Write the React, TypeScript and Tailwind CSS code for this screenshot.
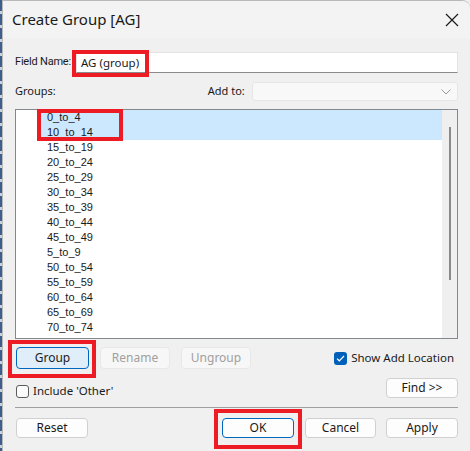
import React from "react";

const items = [
  "0_to_4",
  "10_to_14",
  "15_to_19",
  "20_to_24",
  "25_to_29",
  "30_to_34",
  "35_to_39",
  "40_to_44",
  "45_to_49",
  "5_to_9",
  "50_to_54",
  "55_to_59",
  "60_to_64",
  "65_to_69",
  "70_to_74",
];

const ui = "font-['Noto_Sans','Liberation_Sans',sans-serif]";

function Btn({
  label,
  w,
  kind = "normal",
}: {
  label: string;
  w: string;
  kind?: "normal" | "primary" | "pressed" | "disabled";
}) {
  const styles = {
    normal: "border-[#d0d0d0] bg-[#fdfdfd] text-[#1a1a1a]",
    primary: "border-[#0067c0] bg-[#fdfdfd] text-[#1a1a1a]",
    pressed: "border-[#0067c0] bg-[#e0eef9] text-[#1a1a1a]",
    disabled: "border-[#e8e8e8] bg-[#f7f7f7] text-[#a0a0a0]",
  }[kind];
  return (
    <div
      className={`${w} flex h-full items-center justify-center rounded-[4px] border text-[12px] ${styles}`}
    >
      {label}
    </div>
  );
}

function RedBox({ className }: { className: string }) {
  return (
    <div
      className={`pointer-events-none absolute z-10 border-[4px] border-[#ed1c24] ${className}`}
    />
  );
}

export default function App() {
  return (
    <div className={`flex h-[451px] w-[470px] overflow-hidden bg-[#f0f0f0] ${ui}`}>
      <div className="w-[2px] bg-[repeating-linear-gradient(to_bottom,#3e5f8e_0_11px,#c9d1dc_11px_14px)]" />
      <div className="relative flex flex-1 flex-col rounded-tr-[8px] border-l border-t border-r-0 border-[#b9b9b9] bg-[#f0f0f0]">
        {/* title bar */}
        <div className="flex h-[37px] items-center justify-between rounded-tr-[8px] bg-[#f3f3f3] pl-[9px] pr-[11px]">
          <span className="text-[15px] text-[#1a1a1a]">Create Group [AG]</span>
          <svg width="14" height="14" viewBox="0 0 14 14" className="mt-[1px]">
            <path d="M1 1L13 13M13 1L1 13" stroke="#1a1a1a" strokeWidth="1.2" />
          </svg>
        </div>

        <div className="flex flex-col pl-[12px] pr-[12px]">
          {/* field name */}
          <div className="mt-[14px] flex h-[21px] items-center">
            <span className="w-[61px] shrink-0 whitespace-nowrap font-['Roboto',sans-serif] text-[11px] tracking-[-0.2px] text-[#1a1a1a]">
              Field Name:
            </span>
            <div className="relative flex h-full flex-1 items-center border border-x-[#e3e3e3] border-b-[#8a8a8a] border-t-[#e3e3e3] bg-white pl-[4px] text-[11.5px] text-[#1a1a1a]">
              AG (group)
              <RedBox className="-left-[5px] -top-[3px] h-[27px] w-[77px]" />
            </div>
          </div>

          {/* groups row */}
          <div className="mt-[9px] flex h-[19px] items-center">
            <span className="text-[11px] text-[#1a1a1a]">Groups:</span>
            <span className="ml-[152px] text-[11px] text-[#1a1a1a]">Add to:</span>
            <div className="ml-[7px] flex h-full flex-1 items-center justify-end rounded-[3px] border border-[#e6e6e6] bg-[#f8f8f8] pr-[6px]">
              <svg width="10" height="6" viewBox="0 0 10 6">
                <path d="M0.5 0.5L5 5L9.5 0.5" stroke="#9a9a9a" fill="none" strokeWidth="1" />
              </svg>
            </div>
          </div>

          {/* list */}
          <div className="mt-[8px] flex h-[230px] border border-[#828790] bg-white">
            <div className="relative flex flex-1 flex-col pl-[24px] font-['Liberation_Sans',sans-serif] text-[11px] text-[#1a1a1a]">
              {items.map((it, i) => (
                <div
                  key={it}
                  className={`flex h-[15px] items-center pl-[7px] ${i < 2 ? "bg-[#cce8ff]" : ""}`}
                >
                  {it}
                </div>
              ))}
              <RedBox className="left-[21px] -top-[1px] h-[32px] w-[86px]" />
            </div>
            <div className="flex w-[15px] justify-center bg-[#efefef] pt-[17px]">
              <div className="h-[153px] w-[2px] bg-[#8a8a8a]" />
            </div>
          </div>

          {/* action buttons */}
          <div className="mt-[8px] flex h-[22px] items-center">
            <div className="relative ml-[1px] h-full">
              <Btn label="Group" w="w-[73px]" kind="pressed" />
              <RedBox className="-left-[8px] -top-[7px] h-[38px] w-[88px]" />
            </div>
            <div className="ml-[11px] h-full">
              <Btn label="Rename" w="w-[70px]" kind="disabled" />
            </div>
            <div className="ml-[11px] h-full">
              <Btn label="Ungroup" w="w-[70px]" kind="disabled" />
            </div>
            <div className="ml-auto flex items-center gap-[4px] pr-[4px]">
              <div className="flex h-[13px] w-[13px] items-center justify-center rounded-[3px] bg-[#005fb8]">
                <svg width="9" height="7" viewBox="0 0 9 7">
                  <path d="M1 3.6L3.3 5.8L8 1" stroke="white" fill="none" strokeWidth="1.2" />
                </svg>
              </div>
              <span className="text-[11.5px] text-[#1a1a1a]">Show Add Location</span>
            </div>
          </div>

          {/* include other / find */}
          <div className="mt-[9px] flex h-[20px] items-center">
            <div className="ml-[1px] mt-[6px] flex items-center gap-[4px]">
              <div className="h-[13px] w-[13px] rounded-[3px] border border-[#5c5c5c] bg-[#fbfbfb]" />
              <span className="text-[11.5px] text-[#1a1a1a]">Include 'Other'</span>
            </div>
            <div className="ml-auto h-full">
              <Btn label="Find >>" w="w-[72px]" />
            </div>
          </div>

          <div className="mt-[9px] h-px bg-[#a0a0a0]" />

          {/* bottom buttons */}
          <div className="mt-[10px] flex h-[20px] items-center">
            <div className="ml-[1px] h-full">
              <Btn label="Reset" w="w-[72px]" />
            </div>
            <div className="relative ml-auto h-full">
              <Btn label="OK" w="w-[72px]" kind="primary" />
              <RedBox className="-left-[8px] -top-[9px] h-[40px] w-[88px]" />
            </div>
            <div className="ml-[11px] h-full">
              <Btn label="Cancel" w="w-[71px]" />
            </div>
            <div className="ml-[10px] h-full">
              <Btn label="Apply" w="w-[72px]" />
            </div>
          </div>
        </div>
      </div>
    </div>
  );
}
